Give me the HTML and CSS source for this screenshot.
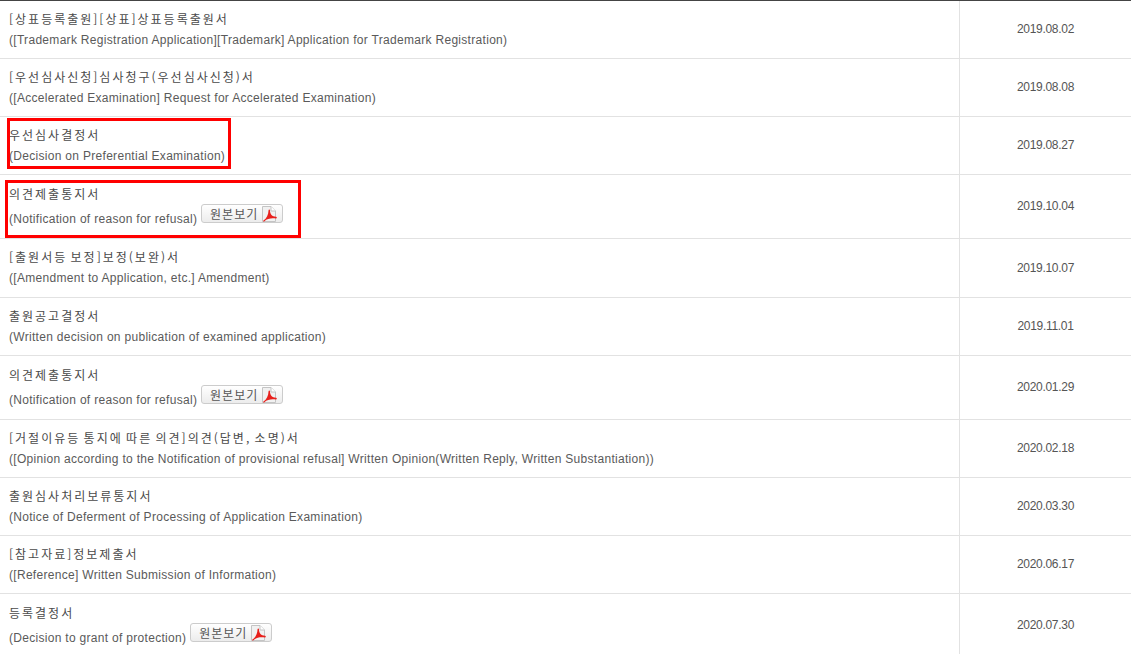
FILE: index.html
```html
<!DOCTYPE html>
<html lang="ko">
<head>
<meta charset="utf-8">
<title>Prosecution history</title>
<link rel="stylesheet" href="styles.css">
</head>
<body>
<svg class="defs" width="0" height="0" aria-hidden="true">
  <symbol id="pdf" viewBox="0 0 16 16">
    <path d="M1.5 .5H10L14.5 5V15.5H1.5Z" fill="#f1f1f1" stroke="#c4c4c4"/>
    <path d="M10 .5V5H14.5" fill="#fff" stroke="#c4c4c4"/>
    <path d="M2.5 14.5C5.5 12.5 7.5 8.5 7.5 4.5C7.5 3 9 3 9 4.5C9 8 11 10.6 15 10.8C16.2 11 16 12.6 14.8 12.4C11 12 6.5 12 3.2 15.4C2.4 16 1.7 15.2 2.5 14.5Z" fill="#e8201c"/>
  </symbol>
</svg>
<main class="list">
  <div class="row"><div class="title"><p class="ko">[상표등록출원][상표]상표등록출원서</p><p class="en">([Trademark Registration Application][Trademark] Application for Trademark Registration)</p></div><div class="date">2019.08.02</div></div>
  <div class="row"><div class="title"><p class="ko">[우선심사신청]심사청구(우선심사신청)서</p><p class="en">([Accelerated Examination] Request for Accelerated Examination)</p></div><div class="date">2019.08.08</div></div>
  <div class="row"><div class="title"><p class="ko">우선심사결정서</p><p class="en">(Decision on Preferential Examination)</p><span class="mark mark-a"></span></div><div class="date">2019.08.27</div></div>
  <div class="row row-btn"><div class="title"><p class="ko">의견제출통지서</p><p class="en en-btn">(Notification of reason for refusal)<span class="view">원본보기<svg class="pdf"><use href="#pdf"/></svg></span></p><span class="mark mark-b"></span></div><div class="date">2019.10.04</div></div>
  <div class="row row-wide"><div class="title"><p class="ko">[출원서등 보정]보정(보완)서</p><p class="en">([Amendment to Application, etc.] Amendment)</p></div><div class="date">2019.10.07</div></div>
  <div class="row"><div class="title"><p class="ko">출원공고결정서</p><p class="en">(Written decision on publication of examined application)</p></div><div class="date">2019.11.01</div></div>
  <div class="row row-btn"><div class="title"><p class="ko">의견제출통지서</p><p class="en en-btn">(Notification of reason for refusal)<span class="view">원본보기<svg class="pdf"><use href="#pdf"/></svg></span></p></div><div class="date">2020.01.29</div></div>
  <div class="row"><div class="title"><p class="ko">[거절이유등 통지에 따른 의견]의견(답변, 소명)서</p><p class="en">([Opinion according to the Notification of provisional refusal] Written Opinion(Written Reply, Written Substantiation))</p></div><div class="date">2020.02.18</div></div>
  <div class="row"><div class="title"><p class="ko">출원심사처리보류통지서</p><p class="en">(Notice of Deferment of Processing of Application Examination)</p></div><div class="date">2020.03.30</div></div>
  <div class="row"><div class="title"><p class="ko">[참고자료]정보제출서</p><p class="en">([Reference] Written Submission of Information)</p></div><div class="date">2020.06.17</div></div>
  <div class="row row-btn"><div class="title"><p class="ko">등록결정서</p><p class="en en-btn">(Decision to grant of protection)<span class="view">원본보기<svg class="pdf"><use href="#pdf"/></svg></span></p></div><div class="date">2020.07.30</div></div>
</main>
</body>
</html>
```

FILE: styles.css
```css
html, body {
  margin: 0;
  padding: 0;
  background: #fff;
}
body {
  height: 654px;
  overflow: hidden;
  font-family: "Liberation Sans", "Noto Sans CJK KR", sans-serif;
  font-size: 12px;
  color: #555;
}
.defs {
  position: absolute;
}
.list {
  border-top: 1px solid #444;
}
.row {
  display: grid;
  grid-template-columns: 960px 1fr;
  box-sizing: border-box;
  height: 58px;
  border-bottom: 1px solid #e2e2e2;
}
.row-btn {
  height: 64px;
}
.row-wide {
  height: 59px;
}
.title {
  position: relative;
  border-right: 1px solid #e2e2e2;
  padding: 10px 0 0 9px;
}
.row-btn .title {
  padding-top: 11px;
}
.ko, .en {
  margin: 0;
  line-height: 18px;
  white-space: nowrap;
}
.ko {
  font-family: "Noto Sans CJK KR", sans-serif;
  letter-spacing: 2px;
  word-spacing: -2px;
  margin-top: -1px;
  color: #4a4a4a;
}
.en {
  margin-top: 3px;
  letter-spacing: 0.3px;
  color: #5a5a5a;
}
.en-btn {
  display: flex;
  align-items: flex-end;
  margin-top: 1px;
  height: 24px;
}
.date {
  display: flex;
  align-items: center;
  justify-content: center;
  padding-bottom: 1px;
  letter-spacing: -0.3px;
  color: #555;
}
.view {
  display: inline-flex;
  align-items: center;
  justify-content: flex-end;
  align-self: flex-start;
  box-sizing: border-box;
  width: 82px;
  height: 19px;
  margin-left: 4px;
  padding-right: 5px;
  gap: 3px;
  border: 1px solid #ccc;
  border-radius: 3px;
  background: linear-gradient(#fff, #ececec);
  font-family: "Noto Sans CJK KR", sans-serif;
  letter-spacing: 1px;
  color: #555;
}
.pdf {
  width: 16px;
  height: 16px;
}
.mark {
  position: absolute;
  box-sizing: border-box;
  border: 3px solid #f00;
}
.mark-a {
  left: 7px;
  top: 1px;
  width: 224px;
  height: 51px;
}
.mark-b {
  left: 5px;
  top: 5px;
  width: 296px;
  height: 58px;
}
```
